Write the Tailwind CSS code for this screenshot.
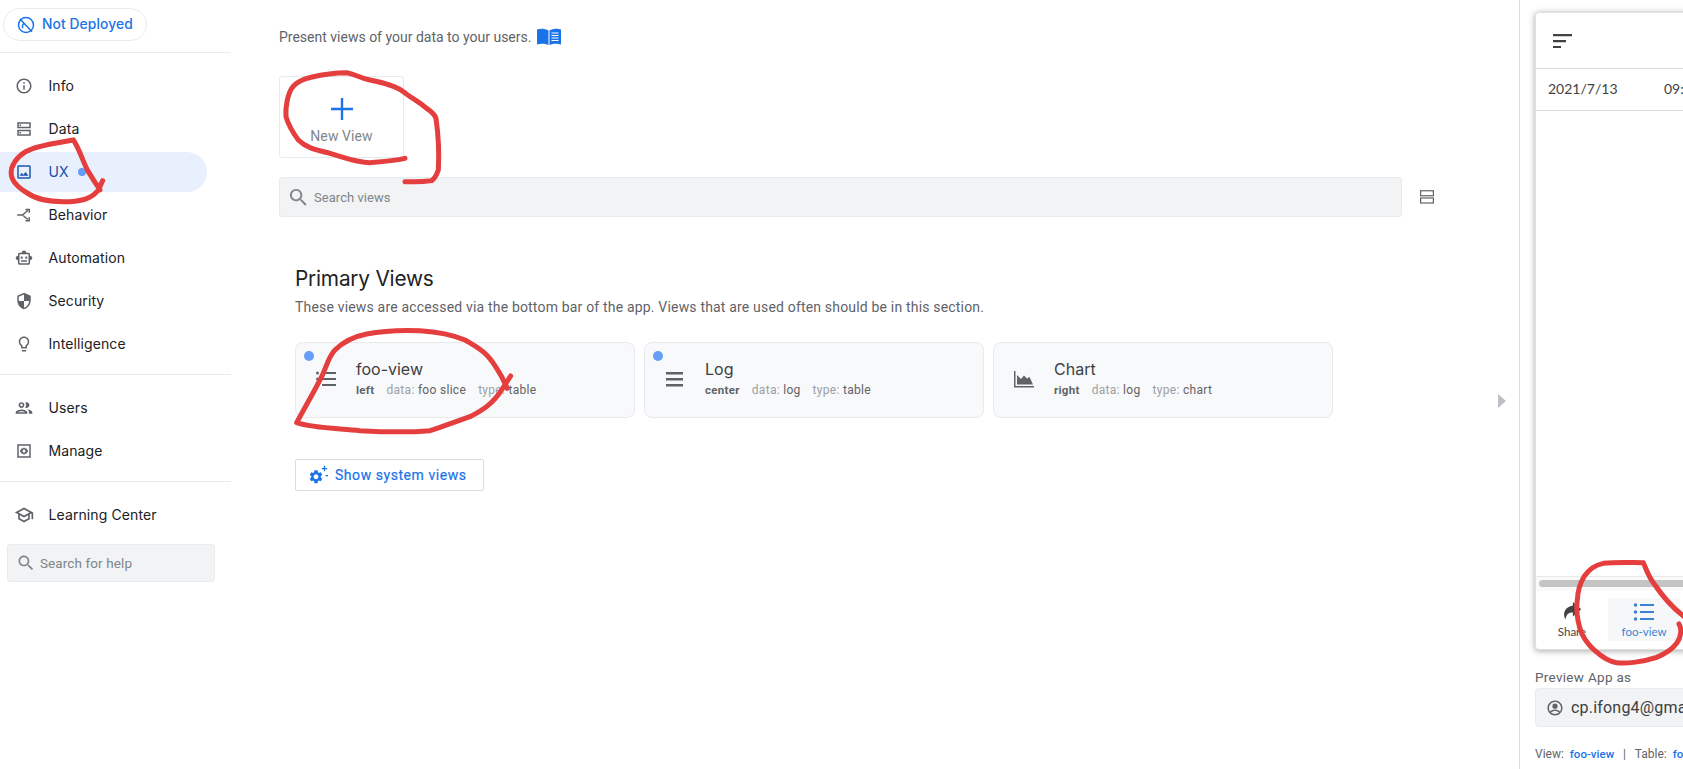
<!DOCTYPE html>
<html lang="en">
<head>
<meta charset="utf-8">
<title>Views</title>
<script src="https://cdn.jsdelivr.net/npm/@tailwindcss/browser@4"></script>
</head>
<body class="bg-white">
<div class="relative flex h-[769px] w-[1683px] overflow-hidden bg-white font-['Roboto',sans-serif] text-[#202124]">

  <aside class="flex w-[231px] shrink-0 flex-col font-['Inter',sans-serif] text-[14px] tracking-[0.1px]">
    <div class="h-[53px] border-b border-[#e8eaed] pl-[3px] pt-[8px]">
      <div class="flex h-[33px] w-[144px] items-center gap-[7px] rounded-full border border-[#e8eaed] pl-[13px] text-[13.800px] font-medium text-[#1a73e8]">
        <svg class="h-[18px] w-[18px]" viewBox="0 0 24 24" fill="none" stroke="#1a73e8" stroke-width="2"><circle cx="12" cy="12" r="10"/><path d="M4 4l16 17M8 16c-1.500-2-1-5 2-6"/></svg>
        <span>Not Deployed</span>
      </div>
    </div>

    <nav class="border-b border-[#e8eaed] pb-[9px] pt-[11px]">
      <a class="flex h-[43px] items-center"><svg class="ml-[15px] mr-[15.500px] h-[18px] w-[18px]" viewBox="0 0 24 24" fill="#5f6368"><path d="M11 7h2v2h-2zm0 4h2v6h-2zm1-9C6.480 2 2 6.480 2 12s4.480 10 10 10 10-4.480 10-10S17.520 2 12 2zm0 18c-4.410 0-8-3.590-8-8s3.590-8 8-8 8 3.590 8 8-3.590 8-8 8z"/></svg>Info</a>
      <a class="flex h-[43px] items-center"><svg class="ml-[15px] mr-[15.500px] h-[18px] w-[18px]" viewBox="0 0 24 24" fill="#5f6368"><path fill-rule="evenodd" d="M3 3h18v8H3zM5 5v4h14V5zM3 13h18v8H3zM5 15v4h14v-4z"/><path d="M6 6h2v2H6zM6 16h2v2H6z"/></svg>Data</a>
      <a class="flex h-[43px] items-center"><span class="flex h-[40px] w-[207px] items-center rounded-r-full bg-[#e8f0fe] text-[#174ea6]"><svg class="ml-[15px] mr-[15.500px] h-[18px] w-[18px]" viewBox="0 0 24 24" fill="#1a56b0"><path d="M19 5v14H5V5h14m0-2H5c-1.100 0-2 .9-2 2v14c0 1.100.9 2 2 2h14c1.100 0 2-.9 2-2V5c0-1.100-.9-2-2-2zm-4.860 8.860l-3 3.870L9 13.140 6 17h12l-3.860-5.140z"/></svg>UX<span class="ml-[9px] h-[8px] w-[8px] rounded-full bg-[#669df6]"></span></span></a>
      <a class="flex h-[43px] items-center"><svg class="ml-[15px] mr-[15.500px] h-[18px] w-[18px]" viewBox="0 0 24 24" fill="none" stroke="#5f6368" stroke-width="2"><path d="M3 12h7l7-6M10 12l7 6M14 4.500h5v4.500M14 19.500h5V15"/></svg>Behavior</a>
      <a class="flex h-[43px] items-center"><svg class="ml-[15px] mr-[15.500px] h-[18px] w-[18px]" viewBox="0 0 24 24" fill="#5f6368"><path d="M20 9V7c0-1.100-.9-2-2-2h-3c0-1.660-1.340-3-3-3S9 3.340 9 5H6c-1.100 0-2 .9-2 2v2c-1.660 0-3 1.340-3 3s1.340 3 3 3v4c0 1.100.9 2 2 2h12c1.100 0 2-.9 2-2v-4c1.660 0 3-1.340 3-3s-1.340-3-3-3zm-2 10H6V7h12v12zm-9-6c-.83 0-1.500-.67-1.500-1.500S8.170 10 9 10s1.500.67 1.500 1.500S9.830 13 9 13zm7.500-1.500c0 .83-.67 1.500-1.500 1.500s-1.500-.67-1.500-1.500.67-1.500 1.500-1.500 1.500.67 1.500 1.500zM8 15h8v2H8v-2z"/></svg>Automation</a>
      <a class="flex h-[43px] items-center"><svg class="ml-[15px] mr-[15.500px] h-[18px] w-[18px]" viewBox="0 0 24 24" fill="#5f6368"><path d="M12 1L3 5v6c0 5.550 3.840 10.740 9 12 5.160-1.260 9-6.450 9-12V5l-9-4zm0 10.990h7c-.53 4.120-3.280 7.790-7 8.940V12H5V6.300l7-3.110v8.800z"/></svg>Security</a>
      <a class="flex h-[43px] items-center"><svg class="ml-[15px] mr-[15.500px] h-[18px] w-[18px]" viewBox="0 0 24 24" fill="#5f6368"><path d="M9 21c0 .55.45 1 1 1h4c.55 0 1-.45 1-1v-1H9v1zm3-19C8.140 2 5 5.140 5 9c0 2.380 1.190 4.470 3 5.740V17c0 .55.45 1 1 1h6c.55 0 1-.45 1-1v-2.260c1.810-1.270 3-3.360 3-5.740 0-3.860-3.140-7-7-7zm2.850 11.100l-.85.6V16h-4v-2.300l-.85-.6C7.800 12.160 7 10.630 7 9c0-2.760 2.240-5 5-5s5 2.240 5 5c0 1.630-.8 3.160-2.150 4.100z"/></svg>Intelligence</a>
    </nav>

    <nav class="border-b border-[#e8eaed] pb-[9px] pt-[11px]">
      <a class="flex h-[43px] items-center"><svg class="ml-[14px] mr-[14.500px] h-[20px] w-[20px]" viewBox="0 0 24 24" fill="#5f6368"><path d="M9 13.750c-2.340 0-7 1.170-7 3.500V19h14v-1.750c0-2.330-4.660-3.500-7-3.500zM4.340 17c.84-.58 2.870-1.250 4.660-1.250s3.820.67 4.660 1.250H4.340zM9 12c1.930 0 3.500-1.570 3.500-3.500S10.930 5 9 5 5.500 6.570 5.500 8.500 7.070 12 9 12zm0-5c.83 0 1.500.67 1.500 1.500S9.830 10 9 10s-1.500-.67-1.500-1.500S8.170 7 9 7zm7.040 6.810c1.160.84 1.960 1.960 1.960 3.440V19h4v-1.750c0-2.020-3.500-3.170-5.960-3.440zM15 12c1.930 0 3.500-1.570 3.500-3.500S16.930 5 15 5c-.54 0-1.040.13-1.500.35.63.89 1 1.980 1 3.150s-.37 2.260-1 3.150c.46.22.96.35 1.500.35z"/></svg>Users</a>
      <a class="flex h-[43px] items-center"><svg class="ml-[15px] mr-[15.500px] h-[18px] w-[18px]" viewBox="0 0 24 24" fill="#5f6368"><path fill-rule="evenodd" d="M3 3h18v18H3zM5 5v14h14V5zM12 7l1.300 1.500 1.900-.3.700 1.800 1.600 1-.7 1 .7 1-1.600 1-.7 1.800-1.900-.3L12 17l-1.300-1.500-1.900.3-.7-1.800-1.600-1 .7-1-.7-1 1.600-1 .7-1.800 1.900.3zM12 10a2 2 0 1 0 0 4 2 2 0 0 0 0-4z"/></svg>Manage</a>
    </nav>

    <div class="pt-[11px]">
      <a class="flex h-[43px] items-center"><svg class="ml-[14px] mr-[14.500px] h-[20px] w-[20px]" viewBox="0 0 24 24" fill="#5f6368"><path d="M12 3L1 9l4 2.180v6L12 21l7-3.820v-6l2-1.090V17h2V9L12 3zm6.820 6L12 12.720 5.180 9 12 5.280 18.820 9zM17 15.990l-5 2.730-5-2.730v-3.720L12 15l5-2.730v3.720z"/></svg>Learning Center</a>
      <div class="ml-[7px] mt-[8px] flex h-[38px] w-[208px] items-center rounded-[3px] border border-[#e8eaed] bg-[#f1f3f4] pl-[8px] font-['Roboto',sans-serif] text-[13.500px] tracking-[0.1px] text-[#80868b]">
        <svg class="mr-[4px] h-[20px] w-[20px]" viewBox="0 0 24 24" fill="#80868b"><path d="M15.500 14h-.79l-.28-.27C15.410 12.590 16 11.110 16 9.500 16 5.910 13.090 3 9.500 3S3 5.910 3 9.500 5.910 16 9.500 16c1.610 0 3.090-.59 4.230-1.570l.27.28v.79l5 4.990L20.490 19l-4.990-5zm-6 0C7.010 14 5 11.990 5 9.500S7.010 5 9.500 5 14 7.010 14 9.500 11.990 14 9.500 14z"/></svg>
        <span>Search for help</span>
      </div>
    </div>
  </aside>

  <main class="relative w-[1288px] shrink-0 pl-[48px] pt-[27px]">
    <div class="flex h-[20px] items-center text-[14px] text-[#5f6368]">
      <span>Present views of your data to your users.</span>
      <svg class="-mt-[1px] ml-[6px] h-[18px] w-[24px]" viewBox="0 0 24 18"><path fill="#1a73e8" d="M0 1.500C3 .5 8 .5 11.500 2.500V17C8 15.500 3 15.500 0 16.500z"/><path fill="#1a73e8" d="M12.500 2.500C16 .5 21 .5 24 1.500v15c-3-1-8-1-11.500.5z"/><path stroke="#fff" stroke-width="1.200" d="M14.500 5h7M14.500 7.500h7M14.500 10h7M14.500 12.500h7"/></svg>
    </div>

    <div class="mt-[29px] flex h-[82px] w-[125px] flex-col items-center rounded-[3px] border border-[#e8eaed] pt-[21px] text-[14px] tracking-[0.1px] text-[#80868b]">
      <svg class="h-[22px] w-[22px]" viewBox="0 0 22 22" fill="#1a73e8"><path d="M9.800 0h2.400v9.800H22v2.400h-9.800V22H9.800v-9.800H0V9.800h9.800z"/></svg>
      <span class="mt-[6px]">New View</span>
    </div>

    <div class="mt-[19px] flex items-center">
      <div class="flex h-[40px] w-[1123px] items-center rounded-[3px] border border-[#e8eaed] bg-[#f1f3f4] pl-[7px] text-[13px] tracking-[0.05px] text-[#80868b]">
        <svg class="mr-[4px] h-[23px] w-[23px]" viewBox="0 0 24 24" fill="#80868b"><path d="M15.500 14h-.79l-.28-.27C15.410 12.590 16 11.110 16 9.500 16 5.910 13.090 3 9.500 3S3 5.910 3 9.500 5.910 16 9.500 16c1.610 0 3.090-.59 4.230-1.570l.27.28v.79l5 4.990L20.490 19l-4.990-5zm-6 0C7.010 14 5 11.990 5 9.500S7.010 5 9.500 5 14 7.010 14 9.500 11.990 14 9.500 14z"/></svg>
        <span class="pt-[1px]">Search views</span>
      </div>
      <svg class="-mt-[1px] ml-[18px] h-[14px] w-[14px]" viewBox="0 0 14 14" fill="none" stroke="#5f6368" stroke-width="1.200"><rect x=".6" y=".75" width="12.800" height="5"/><rect x=".6" y="8" width="12.800" height="5"/></svg>
    </div>

    <section class="ml-[16px] mt-[48px]">
      <h2 class="h-[28px] font-['Inter',sans-serif] text-[20.800px] leading-[28px] font-normal tracking-[-0.2px] text-[#202124]">Primary Views</h2>
      <p class="mt-[4px] h-[20px] text-[14px] leading-[20px] tracking-[0.18px] text-[#5f6368]">These views are accessed via the bottom bar of the app. Views that are used often should be in this section.</p>

      <div class="mt-[25px] flex gap-[9px]">
        <div class="relative flex h-[76px] w-[340px] rounded-[8px] border border-[#e8eaed] bg-[#f8f9fa]">
          <span class="absolute left-[8px] top-[8px] h-[10px] w-[10px] rounded-full bg-[#669df6]"></span>
          <svg class="ml-[19px] mt-[25px] h-[22px] w-[22px]" viewBox="0 0 22 22" fill="#5f6368"><circle cx="2.500" cy="5" r="1.500"/><circle cx="2.500" cy="11" r="1.500"/><circle cx="2.500" cy="17" r="1.500"/><path d="M7 4h14v2H7zM7 10h14v2H7zM7 16h14v2H7z"/></svg>
          <div class="ml-[19px] pt-[15px]">
            <div class="h-[22px] font-['Inter',sans-serif] text-[16px] leading-[22px] text-[#3c4043]">foo-view</div>
            <div class="mt-[2px] flex gap-[12px] text-[12px] leading-[16px] tracking-[0.3px] text-[#5f6368]"><b class="text-[11.500px] font-bold">left</b><span><span class="text-[#9aa0a6]">data:</span> foo slice</span><span><span class="text-[#9aa0a6]">type:</span> table</span></div>
          </div>
        </div>
        <div class="relative flex h-[76px] w-[340px] rounded-[8px] border border-[#e8eaed] bg-[#f8f9fa]">
          <span class="absolute left-[8px] top-[8px] h-[10px] w-[10px] rounded-full bg-[#669df6]"></span>
          <svg class="ml-[19px] mt-[25px] h-[22px] w-[22px]" viewBox="0 0 22 22" fill="#5f6368"><path d="M2 4h17v2.500H2zM2 10h17v2.500H2zM2 16h17v2.500H2z"/></svg>
          <div class="ml-[19px] pt-[15px]">
            <div class="h-[22px] font-['Inter',sans-serif] text-[16px] leading-[22px] text-[#3c4043]">Log</div>
            <div class="mt-[2px] flex gap-[12px] text-[12px] leading-[16px] tracking-[0.3px] text-[#5f6368]"><b class="text-[11.500px] font-bold">center</b><span><span class="text-[#9aa0a6]">data:</span> log</span><span><span class="text-[#9aa0a6]">type:</span> table</span></div>
          </div>
        </div>
        <div class="relative flex h-[76px] w-[340px] rounded-[8px] border border-[#e8eaed] bg-[#f8f9fa]">
          <svg class="ml-[19px] mt-[25px] h-[22px] w-[22px]" viewBox="0 0 22 22" fill="#5f6368"><path d="M1 3h1.500v15H21v1.500H1z"/><path d="M4 16.500V7l4 4 3-3.500 3 3 2.500-1.500 3.500 7.500z"/></svg>
          <div class="ml-[19px] pt-[15px]">
            <div class="h-[22px] font-['Inter',sans-serif] text-[16px] leading-[22px] text-[#3c4043]">Chart</div>
            <div class="mt-[2px] flex gap-[12px] text-[12px] leading-[16px] tracking-[0.3px] text-[#5f6368]"><b class="text-[11.500px] font-bold">right</b><span><span class="text-[#9aa0a6]">data:</span> log</span><span><span class="text-[#9aa0a6]">type:</span> chart</span></div>
          </div>
        </div>
      </div>

      <button class="mt-[41px] flex h-[32px] w-[189px] items-center rounded-[2px] border border-[#dadce0] pl-[12px] text-[14px] font-normal tracking-[0.55px] text-[#1a73e8] [-webkit-text-stroke:0.2px_#1a73e8]">
        <svg class="mr-[7px] h-[20px] w-[20px]" viewBox="0 0 24 24" fill="#1a73e8"><g transform="translate(0 4.500) scale(.8)"><path d="M19.140 12.940c.04-.3.06-.61.06-.94 0-.32-.02-.64-.07-.94l2.030-1.580c.18-.14.23-.41.12-.61l-1.920-3.320c-.12-.22-.37-.29-.59-.22l-2.390.96c-.5-.38-1.030-.7-1.620-.94l-.36-2.540c-.04-.24-.24-.41-.48-.41h-3.840c-.24 0-.43.17-.47.41l-.36 2.540c-.59.24-1.130.57-1.620.94l-2.390-.96c-.22-.08-.47 0-.59.22L2.740 8.870c-.12.21-.08.47.12.61l2.030 1.580c-.05.3-.09.63-.09.94s.02.64.07.94l-2.030 1.580c-.18.14-.23.41-.12.61l1.920 3.320c.12.22.37.29.59.22l2.390-.96c.5.38 1.030.7 1.620.94l.36 2.540c.05.24.24.41.48.41h3.840c.24 0 .44-.17.47-.41l.36-2.540c.59-.24 1.130-.56 1.620-.94l2.390.96c.22.08.47 0 .59-.22l1.920-3.320c.12-.22.07-.47-.12-.61l-2.010-1.580zM12 15.600c-1.980 0-3.600-1.620-3.600-3.600s1.620-3.600 3.600-3.600 3.600 1.620 3.600 3.600-1.620 3.600-3.600 3.600z"/></g><path d="M19 1h1.500v2.500H23V5h-2.500v2.500H19V5h-2.500V3.500H19zM21 12h3v1.500h-3z"/></svg>
        Show system views
      </button>
    </section>

    <svg class="absolute left-[1267px] top-[394px] h-[14px] w-[8px]" viewBox="0 0 8 14" fill="#bdc1c6"><path d="M0 0l8 7-8 7z"/></svg>
  </main>

  <aside class="w-[164px] shrink-0 overflow-hidden border-l border-[#dadce0] pl-[15px] pt-[12px]">
    <div class="flex h-[638px] w-[220px] flex-col rounded-l-[4px] border border-[#e0e0e0] bg-white font-['Lato',sans-serif] shadow-[0_1px_6px_rgba(0,0,0,0.35)]">
      <div class="flex h-[56px] shrink-0 items-center border-b border-[#dcdcdc] pl-[17px]">
        <svg class="h-[14px] w-[19px]" viewBox="0 0 19 14" fill="#424242"><path d="M0 0h19v2.200H0zM0 6h13v2.200H0zM0 12h8v2.200H0z"/></svg>
      </div>
      <div class="flex h-[42px] shrink-0 items-center border-b border-[#dcdcdc] pb-[2px] pl-[12px] text-[14px] text-[#424242]">
        <span class="w-[116px]">2021/7/13</span><span>09:</span>
      </div>
      <div class="flex-1"></div>
      <div class="h-[15px] shrink-0 border-t border-[#e8e8e8] bg-[#fafafa] pl-[3px] pt-[3px]"><div class="h-[7px] w-[300px] rounded-full bg-[#c4c4c4]"></div></div>
      <div class="flex h-[58px] shrink-0 items-start pt-[7px]">
        <div class="flex w-[58px] flex-col items-center pl-[14px] text-[11.500px] text-[#424242]">
          <svg class="mt-[3px] h-[22px] w-[22px]" viewBox="0 0 24 24" fill="#424242"><path d="M13 5V1l9 8-9 8v-4.500c-4 0-7 1-8 7.500C2.500 16 2 7 13 5z"/></svg>
          <span>Share</span>
        </div>
        <div class="ml-[14px] flex h-[43px] w-[72px] flex-col items-center bg-[#f6f7f8] pt-[3px] text-[11.500px] text-[#3b82d6]">
          <svg class="h-[22px] w-[22px]" viewBox="0 0 22 22" fill="#3b82d6"><circle cx="2.500" cy="4" r="1.800"/><circle cx="2.500" cy="11" r="1.800"/><circle cx="2.500" cy="18" r="1.800"/><path d="M7 3h14v2H7zM7 10h14v2H7zM7 17h14v2H7z"/></svg>
          <span>foo-view</span>
        </div>
      </div>
    </div>
    <div class="mt-[17px] h-[20px] text-[13.500px] leading-[20px] tracking-[0.3px] whitespace-nowrap text-[#5f6368]">Preview App as</div>
    <div class="mt-[1px] flex h-[39px] w-[220px] items-center rounded-[4px] border border-[#e8eaed] bg-[#f1f3f4] pl-[10px] text-[16px] tracking-[0.2px] whitespace-nowrap text-[#3c4043]">
      <svg class="mr-[7px] h-[18px] w-[18px]" viewBox="0 0 24 24" fill="#5f6368"><path d="M12 2C6.480 2 2 6.480 2 12s4.480 10 10 10 10-4.480 10-10S17.520 2 12 2zm0 18c-2 0-3.900-.7-5.400-1.900 1.500-1.300 3.400-2.100 5.400-2.100s3.900.8 5.400 2.100C15.900 19.300 14 20 12 20zm6.800-3.300C17 15 14.600 14 12 14s-5 1-6.800 2.700C4.400 15.400 4 13.800 4 12c0-4.400 3.600-8 8-8s8 3.600 8 8c0 1.800-.4 3.400-1.200 4.700zM12 6a3.500 3.500 0 1 0 0 7 3.500 3.500 0 0 0 0-7z"/></svg>
      <span>cp.ifong4@gmail.com</span>
    </div>
    <div class="mt-[19px] text-[12px] leading-[16px] whitespace-nowrap text-[#5f6368]">View:&nbsp; <span class="text-[11.500px] font-medium text-[#1a73e8]">foo-view</span> &nbsp;&nbsp;|&nbsp;&nbsp; Table:&nbsp; <span class="text-[11.500px] font-medium text-[#1a73e8]">foo slice</span></div>
  </aside>

  <svg class="pointer-events-none absolute left-0 top-0 h-[769px] w-[1683px]" viewBox="0 0 1683 769" fill="none" stroke="#e53e3e" stroke-width="15" stroke-linecap="round" stroke-linejoin="round">
    <g transform="scale(.3333)">
      <path d="M220 420C190 425 130 435 100 445C70 455 45 475 35 505C28 535 45 555 75 575C110 600 150 608 210 605C250 603 275 595 295 570L308 542M220 420C240 450 250 490 265 515C280 540 290 555 300 570"/>
    </g>
    <g transform="translate(260 0) scale(.3333)">
      <path d="M435 475C400 483 370 485 330 488C290 488 260 475 210 460C170 450 140 445 115 420C100 400 85 375 78 350C75 320 85 280 95 265C105 250 125 240 140 235C170 228 200 218 260 218C285 222 300 235 330 240C370 248 410 260 430 275C450 292 470 300 500 325C515 335 525 345 528 355C533 390 538 460 535 510C530 525 525 535 515 542C490 546 460 546 435 545"/>
    </g>
    <g transform="translate(280 260) scale(.3333)">
      <path d="M50 488C70 450 100 400 125 350C140 320 145 290 165 270C190 245 220 230 260 222C310 212 370 210 420 212C470 215 520 225 555 240C580 255 600 265 620 285C640 305 650 325 665 350L682 385M692 348L668 385C640 430 610 450 570 470C530 485 490 498 450 512C380 518 310 516 240 512C180 505 100 505 50 488"/>
    </g>
    <g transform="translate(1480 550) scale(.3333)">
      <path d="M490 38C450 38 410 36 370 40C345 45 325 60 312 80C300 100 293 125 292 150C288 180 292 215 305 250C315 270 325 285 345 302C365 320 385 335 410 338C440 342 490 335 530 322C555 312 575 300 590 280C605 260 605 235 597 222M490 38C500 60 505 80 525 105C545 135 575 170 612 200"/>
    </g>
  </svg>
</div>
</body>
</html>
